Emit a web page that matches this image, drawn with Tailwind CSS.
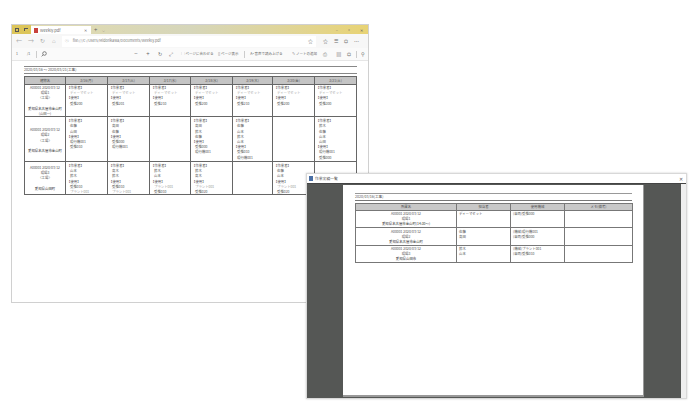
<!doctype html>
<html>
<head>
<meta charset="UTF-8">
<script src="https://cdn.jsdelivr.net/npm/@tailwindcss/browser@4"></script>
</head>
<body class="bg-white w-[700px] h-[418px] overflow-hidden relative font-['Noto_Sans_CJK_JP','Liberation_Sans',sans-serif] text-[3.4px] leading-[5.2px] text-[#555]">

<!-- browser window -->
<div class="absolute left-[11px] top-[24px] w-[358px] h-[279px] border border-[#d0d0d0] bg-white flex flex-col">
  <div class="h-[9px] flex items-end bg-gradient-to-r from-[#e3dcae] via-[#d6d6ba] to-[#e8d374] shrink-0 text-[#666]">
    <div class="w-[9px] h-[9px] bg-[#dcc55a] flex items-center justify-center"><div class="w-[4px] h-[4px] border border-[#555]"></div></div>
    <div class="w-[10px] h-[9px] bg-[#dcc55a] flex items-center justify-center"><div class="w-[4px] h-[3px] border-t border-l border-[#555]"></div></div>
    <div class="w-[60px] h-[8px] bg-white flex items-center pl-[3px] gap-[2px] text-[4px] leading-[8px]">
      <div class="w-[4px] h-[5px] bg-[#c8413c]"></div><span>Weekly.pdf</span><span class="ml-auto mr-[4px] text-[#777]">✕</span>
    </div>
    <span class="ml-[3px] text-[6px] leading-[8px]">+</span>
    <span class="ml-[5px] text-[4px] leading-[8px]">⌵</span>
    <div class="ml-auto flex gap-[9px] pr-[5px] text-[4px] leading-[8px]"><span>–</span><span>▫</span><span>✕</span></div>
  </div>
  <div class="h-[14px] flex items-center bg-[#f7f7f7] shrink-0 pl-[4px] text-[#aaa] text-[6px] leading-[8px]">
    <span class="w-[12px]">←</span><span class="w-[12px]">→</span><span class="w-[12px]">↻</span><span class="w-[10px]">⌂</span>
    <div class="w-[254px] h-[11px] bg-white flex items-center pl-[3px] gap-[4px] text-[3.7px] text-[#777]"><span>ⓘ</span><span>file:///C:/Users/Midorikawa/Documents/Weekly.pdf</span><span class="ml-auto mr-[3px] text-[5px]">☆</span></div>
    <div class="flex gap-[6px] pl-[7px] text-[5px] text-[#666]"><span>☆</span><span>☰</span><span>⛭</span><span>…</span></div>
  </div>
  <div class="h-[13px] flex items-center bg-[#fafafa] shrink-0 pl-[4px] text-[3.5px] text-[#666] border-b border-[#e6e6e6]">
    <span class="w-[9px] h-[8px] flex items-center">1</span><span class="ml-[2px]">/1</span>
    <div class="ml-[6px] w-px h-[7px] bg-[#ccc]"></div>
    <svg class="ml-[4px]" width="6" height="6" viewBox="0 0 6 6" fill="none" stroke="#555" stroke-width=".7"><circle cx="3.5" cy="2.5" r="1.8"/><path d="M2.2 3.8 0.6 5.4"/></svg>
    <div class="ml-[87px] flex items-center leading-[8px]">
      <span class="w-[12px] text-[6px]">−</span><span class="w-[12px] text-[6px]">+</span><span class="w-[11px] text-[5px]">↻</span><span class="w-[12px] text-[5px]">⤢</span>
      <span class="w-[37px]">▢ ページに合わせる</span><span class="w-[26px]">▯ ページ表示</span><div class="w-px h-[7px] bg-[#ccc] mr-[5px]"></div>
      <span class="w-[42px]">Aᵃ 音声で読み上げる</span><span class="w-[31px]">✎ ノートの追加</span>
      <span class="w-[13px] text-[5px]">⎙</span><span class="w-[11px] text-[5px]">▤</span><span class="w-[9px] text-[5px]">⛭</span><div class="w-px h-[7px] bg-[#ccc] mr-[4px]"></div><span class="text-[5px]">⚲</span>
    </div>
  </div>
  <div class="flex-1 relative flex">
    <div class="flex-1 pl-[12px] pr-[11px] pt-[5px]">
      <div class="border-t border-[#888] h-[7px] flex items-end leading-[6px] text-[3.6px]">2020/03/16 ～ 2020/03/21(工事)</div>
      <div class="border-t border-[#888] h-[3px]"></div>
      <table class="table-fixed border-collapse w-[332px]">
        <colgroup><col class="w-[41px]"><col class="w-[42px]"><col class="w-[42px]"><col class="w-[41px]"><col class="w-[42px]"><col class="w-[40px]"><col class="w-[42px]"><col class="w-[42px]"></colgroup>
        <tr class="h-[8px] bg-[#c4c4c4] text-center">
          <td class="border border-[#666] p-0">建物名</td><td class="border border-[#666] p-0">3/16(月)</td><td class="border border-[#666] p-0">3/17(火)</td><td class="border border-[#666] p-0">3/17(水)</td><td class="border border-[#666] p-0">3/18(水)</td><td class="border border-[#666] p-0">3/19(木)</td><td class="border border-[#666] p-0">3/20(金)</td><td class="border border-[#666] p-0">3/21(土)</td>
        </tr>
        <tr class="h-[32px] align-top">
          <td class="border border-[#666] p-0 text-center">A00001 2020/03/12<br>現場1<br>〈工場〉<br><br><span class="text-[#333]">愛知県名古屋市金山町</span><br>(山田一)</td>
          <td class="border border-[#666] p-0 pl-[1px]">【作業者】<br><span class="pl-[3px] text-[#aaa]">ディーマセット</span><br>【使用】<br><span class="pl-[3px]">受推200</span></td>
          <td class="border border-[#666] p-0 pl-[1px]">【作業者】<br><span class="pl-[3px] text-[#aaa]">ディーマセット</span><br>【使用】<br><span class="pl-[3px]">受推201</span></td>
          <td class="border border-[#666] p-0 pl-[1px]">【作業者】<br><span class="pl-[3px] text-[#aaa]">ディーマセット</span><br>【使用】<br><span class="pl-[3px]">受推210</span></td>
          <td class="border border-[#666] p-0 pl-[1px]">【作業者】<br><span class="pl-[3px] text-[#aaa]">ディーマセット</span><br>【使用】<br><span class="pl-[3px]">受推200</span></td>
          <td class="border border-[#666] p-0 pl-[1px]">【作業者】<br><span class="pl-[3px] text-[#aaa]">ディーマセット</span><br>【使用】<br><span class="pl-[3px]">受推210</span></td>
          <td class="border border-[#666] p-0 pl-[1px]">【作業者】<br><span class="pl-[3px] text-[#aaa]">ディーマセット</span><br>【使用】<br><span class="pl-[3px]">受推200</span></td>
          <td class="border border-[#666] p-0 pl-[1px]">【作業者】<br><span class="pl-[3px] text-[#aaa]">ディーマセット</span><br>【使用】<br><span class="pl-[3px]">受推300</span></td>
        </tr>
        <tr class="h-[45px] align-top">
          <td class="border border-[#666] p-0 pt-[10px] text-center">A00001 2020/03/12<br>現場2<br>〈工場〉<br><br><span class="text-[#333]">愛知県名古屋市金山町</span></td>
          <td class="border border-[#666] p-0 pl-[1px] pt-[1px]">【作業者】<br><span class="pl-[3px]">佐藤</span><br><span class="pl-[3px]">山田</span><br>【使用】<br><span class="pl-[3px]">現行機001</span><br><span class="pl-[3px]">受推010</span></td>
          <td class="border border-[#666] p-0 pl-[1px] pt-[1px]">【作業者】<br><span class="pl-[3px]">高田</span><br><span class="pl-[3px]">佐藤</span><br>【使用】<br><span class="pl-[3px]">受推000</span><br><span class="pl-[3px]">現行機001</span></td>
          <td class="border border-[#666] p-0"></td>
          <td class="border border-[#666] p-0 pl-[1px] pt-[1px]">【作業者】<br><span class="pl-[3px]">高田</span><br><span class="pl-[3px]">鈴木</span><br><span class="pl-[3px]">佐藤</span><br>【使用】<br><span class="pl-[3px]">受推000</span><br><span class="pl-[3px]">現行機001</span></td>
          <td class="border border-[#666] p-0 pl-[1px] pt-[1px]">【作業者】<br><span class="pl-[3px]">佐藤</span><br><span class="pl-[3px]">山本</span><br><span class="pl-[3px]">鈴木</span><br><span class="pl-[3px]">山本</span><br>【使用】<br><span class="pl-[3px]">受推010</span><br><span class="pl-[3px]">現行機001</span></td>
          <td class="border border-[#666] p-0"></td>
          <td class="border border-[#666] p-0 pl-[1px] pt-[1px]">【作業者】<br><span class="pl-[3px]">鈴木</span><br><span class="pl-[3px]">佐藤</span><br><span class="pl-[3px]">山本</span><br><span class="pl-[3px]">山田</span><br>【使用】<br><span class="pl-[3px]">現行機001</span><br><span class="pl-[3px]">受推000</span></td>
        </tr>
        <tr class="h-[32px] align-top leading-[5.1px]">
          <td class="border border-[#666] p-0 pt-[3px] text-center">A00001 2020/03/12<br>現場3<br>〈工場〉<br><br><span class="text-[#333]">愛知県山田町</span></td>
          <td class="border border-[#666] p-0 pl-[1px] pt-[1px]">【作業者】<br><span class="pl-[3px]">山本</span><br><span class="pl-[3px]">鈴木</span><br>【使用】<br><span class="pl-[3px]">受推010</span><br><span class="pl-[3px] text-[#999]">プラント001</span></td>
          <td class="border border-[#666] p-0 pl-[1px] pt-[1px]">【作業者】<br><span class="pl-[3px]">高木</span><br><span class="pl-[3px]">鈴木</span><br>【使用】<br><span class="pl-[3px]">受推010</span><br><span class="pl-[3px] text-[#999]">プラント001</span></td>
          <td class="border border-[#666] p-0 pl-[1px] pt-[1px]">【作業者】<br><span class="pl-[3px]">鈴木</span><br><span class="pl-[3px]">山本</span><br>【使用】<br><span class="pl-[3px] text-[#999]">プラント001</span><br><span class="pl-[3px]">受推010</span></td>
          <td class="border border-[#666] p-0 pl-[1px] pt-[1px]">【作業者】<br><span class="pl-[3px]">鈴木</span><br><span class="pl-[3px]">高木</span><br>【使用】<br><span class="pl-[3px] text-[#999]">プラント001</span><br><span class="pl-[3px]">受推020</span></td>
          <td class="border border-[#666] p-0"></td>
          <td class="border border-[#666] p-0 pl-[1px] pt-[1px]">【作業者】<br><span class="pl-[3px]">佐藤</span><br><span class="pl-[3px]">山本</span><br>【使用】<br><span class="pl-[3px] text-[#999]">プラント001</span><br><span class="pl-[3px]">受推020</span></td>
          <td class="border border-[#666] p-0"></td>
        </tr>
      </table>
    </div>
    <div class="w-[2px] bg-[#e6e6e6]"></div>
  </div>
</div>

<!-- report preview window -->
<div class="absolute left-[306px] top-[173px] w-[381px] h-[226px] bg-white border border-[#d8d8d8] flex flex-col shadow-[0_0_2px_rgba(0,0,0,0.2)]">
  <div class="h-[9px] flex items-center px-[2px] gap-[2px] shrink-0 text-[3.8px]">
    <div class="w-[4px] h-[5px] bg-[#4a6fa5]"></div><span>作業実績一覧</span><span class="ml-auto mr-[1px] text-[5px] text-[#666]">✕</span>
  </div>
  <div class="flex-1 flex bg-[#555755] border-t border-[#444]">
    <div class="w-[36px]"></div>
    <div class="w-[301px] bg-white mt-[1px] mb-[1px] pl-[12px] pt-[8px] border-r border-b-2 border-[#999]">
      <div class="w-[277px] border-t border-[#999] h-[7px] flex items-center text-[3.6px]">2020/03/16(工事)</div>
      <div class="w-[277px] border-t border-[#777] h-[3px]"></div>
      <table class="table-fixed border-collapse w-[277px]">
        <colgroup><col class="w-[101px]"><col class="w-[54px]"><col class="w-[54px]"><col class="w-[68px]"></colgroup>
        <tr class="h-[7px] bg-[#c8c8c8] text-center">
          <td class="border border-[#777] p-0">所属名</td><td class="border border-[#777] p-0">担当者</td><td class="border border-[#777] p-0">使用機械</td><td class="border border-[#777] p-0">メモ(備考)</td>
        </tr>
        <tr class="h-[16px] align-top">
          <td class="border border-[#777] p-0 text-center">A00001 2020/03/12<br>現場1<br><span class="text-[#333]">愛知県名古屋市金山町(14:30～)</span></td>
          <td class="border border-[#777] p-0 pl-[2px]">ディーマセット</td>
          <td class="border border-[#777] p-0 pl-[2px]">(車両)受推000</td>
          <td class="border border-[#777] p-0"></td>
        </tr>
        <tr class="h-[18px] align-top">
          <td class="border border-[#777] p-0 pt-[1px] text-center">A00001 2020/03/12<br>現場2<br><span class="text-[#333]">愛知県名古屋市金山町</span></td>
          <td class="border border-[#777] p-0 pl-[2px] pt-[1px]">佐藤<br>高田</td>
          <td class="border border-[#777] p-0 pl-[2px] pt-[1px]">(機械)現行機001<br>(車両)受推000</td>
          <td class="border border-[#777] p-0"></td>
        </tr>
        <tr class="h-[17px] align-top">
          <td class="border border-[#777] p-0 text-center">A00001 2020/03/12<br>現場3<br><span class="text-[#333]">愛知県山田市</span></td>
          <td class="border border-[#777] p-0 pl-[2px]">鈴木<br>山本</td>
          <td class="border border-[#777] p-0 pl-[2px]">(機械)プラント001<br>(車両)受推010</td>
          <td class="border border-[#777] p-0"></td>
        </tr>
      </table>
    </div>
    <div class="flex-1"></div>
    <div class="w-[5px] bg-[#efefef]"></div>
  </div>
</div>
</body>
</html>
